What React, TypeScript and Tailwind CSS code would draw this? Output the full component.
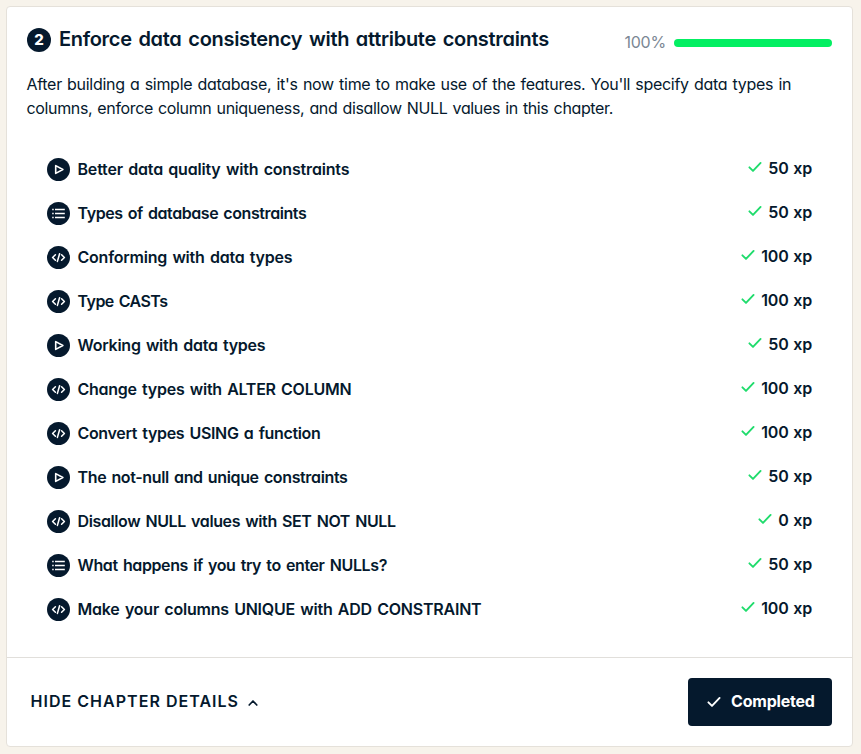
type Kind = 'video' | 'list' | 'code';

const exercises: { kind: Kind; title: string; xp: number; tracking: string }[] = [
  { kind: 'video', title: 'Better data quality with constraints', xp: 50, tracking: 'tracking-[-0.18px]' },
  { kind: 'list', title: 'Types of database constraints', xp: 50, tracking: 'tracking-[-0.42px]' },
  { kind: 'code', title: 'Conforming with data types', xp: 100, tracking: 'tracking-[-0.22px]' },
  { kind: 'code', title: 'Type CASTs', xp: 100, tracking: 'tracking-[-0.55px]' },
  { kind: 'video', title: 'Working with data types', xp: 50, tracking: 'tracking-[-0.26px]' },
  { kind: 'code', title: 'Change types with ALTER COLUMN', xp: 100, tracking: 'tracking-[-0.25px]' },
  { kind: 'code', title: 'Convert types USING a function', xp: 100, tracking: 'tracking-[-0.33px]' },
  { kind: 'video', title: 'The not-null and unique constraints', xp: 50, tracking: 'tracking-[-0.36px]' },
  { kind: 'code', title: 'Disallow NULL values with SET NOT NULL', xp: 0, tracking: 'tracking-[-0.38px]' },
  { kind: 'list', title: 'What happens if you try to enter NULLs?', xp: 50, tracking: 'tracking-[-0.38px]' },
  { kind: 'code', title: 'Make your columns UNIQUE with ADD CONSTRAINT', xp: 100, tracking: 'tracking-[-0.22px]' },
];

function KindIcon({ kind }: { kind: Kind }) {
  return (
    <svg className="h-[23px] w-[23px] shrink-0" viewBox="0 0 23 23" fill="none" stroke="#fff">
      <circle cx="11.5" cy="11.5" r="11.5" fill="#05192d" stroke="none" />
      {kind === 'video' && <path d="M8.7 7.6v7.8l7.2-3.9z" strokeWidth="1.6" strokeLinejoin="round" />}
      {kind === 'list' && (
        <path d="M5.2 7.5h1.5M8 7.5h9.8M5.2 11.5h1.5M8 11.5h9.8M5.2 15.5h1.5M8 15.5h9.8" strokeWidth="1.4" />
      )}
      {kind === 'code' && (
        <path d="M8.4 8.8 5.6 11.5l2.8 2.7M14.6 8.8l2.8 2.7-2.8 2.7M12.6 7.8l-2.2 7.6" strokeWidth="1.55" strokeLinecap="round" strokeLinejoin="round" />
      )}
    </svg>
  );
}

function Check({ className }: { className: string }) {
  return (
    <svg className={className} viewBox="0 0 14 12" fill="none" stroke="currentColor" strokeWidth="1.9" strokeLinecap="round" strokeLinejoin="round">
      <path d="M1.4 6.3 5 9.9 12.6 1.9" />
    </svg>
  );
}

export default function App() {
  return (
    <div className="h-[754px] w-[861px] bg-[#f7f3eb] py-1.5 pr-2 pl-1.5 font-['Inter','Liberation_Sans',sans-serif] text-[#05192d] [font-feature-settings:'cv11']">
      <section className="flex h-[741px] flex-col rounded-[4px] border border-[#e5e1da] bg-white">
        <header className="flex h-[50px] items-start justify-between pr-5 pl-5">
          <div className="flex items-start pt-5">
            <span className="mt-px flex size-6 items-center justify-center rounded-full bg-[#05192d] text-[15px] leading-6 font-extrabold text-white">2</span>
            <h2 className="ml-2 text-[20px] leading-6 font-semibold tracking-[-0.3px] whitespace-nowrap [word-spacing:2px]">
              Enforce data consistency with attribute constraints
            </h2>
          </div>
          <div className="flex items-start pt-[23px]">
            <span className="mr-2 text-[16px] leading-6 tracking-[-0.2px] text-[#7b8794]">100%</span>
            <div className="mt-[9px] h-2 w-[158px] rounded-full bg-[#03ef62]" />
          </div>
        </header>
        <p className="mt-[15px] ml-[19.5px] text-[16px] leading-6 whitespace-nowrap [word-spacing:1px]">
          <span className="block tracking-[-0.29px]">After building a simple database, it's now time to make use of the features. You'll specify data types in</span>
          <span className="block tracking-[-0.36px]">columns, enforce column uniqueness, and disallow NULL values in this chapter.</span>
        </p>
        <ul className="mt-[27px] pr-10 pl-10">
          {exercises.map((e) => (
            <li key={e.title} className="flex h-11 items-center justify-between">
              <div className="flex items-center">
                <KindIcon kind={e.kind} />
                <span className={`ml-[7.5px] text-[16px] leading-6 font-semibold whitespace-nowrap [word-spacing:1.5px] ${e.tracking}`}>{e.title}</span>
              </div>
              <div className="flex items-center pb-0.5">
                <Check className="mr-1.5 mb-0.5 h-3 w-3.5 text-[#1fdc6c]" />
                <span className="text-[16px] leading-6 font-semibold tracking-[-0.15px] [word-spacing:0.7px]">{e.xp} xp</span>
              </div>
            </li>
          ))}
        </ul>
        <footer className="mt-auto flex h-[89px] items-center justify-between border-t border-[#e1dfdb] pr-5 pl-[23.5px]">
          <button className="mb-0.5 flex items-center text-[16px] leading-6 font-semibold tracking-[1.03px]">
            HIDE CHAPTER DETAILS
            <svg className="mt-1 ml-[9px] h-2 w-2.5" viewBox="0 0 10 8" fill="none" stroke="currentColor" strokeWidth="1.7" strokeLinecap="round" strokeLinejoin="round">
              <path d="m1.2 6 3.8-4 3.8 4" />
            </svg>
          </button>
          <button className="flex h-12 w-36 items-center rounded-[4px] bg-[#05192d] pl-[19px] text-[16px] font-bold tracking-[-0.2px] text-white">
            <Check className="mr-[10px] h-3 w-3.5" />
            <span className="mb-0.5">Completed</span>
          </button>
        </footer>
      </section>
    </div>
  );
}
